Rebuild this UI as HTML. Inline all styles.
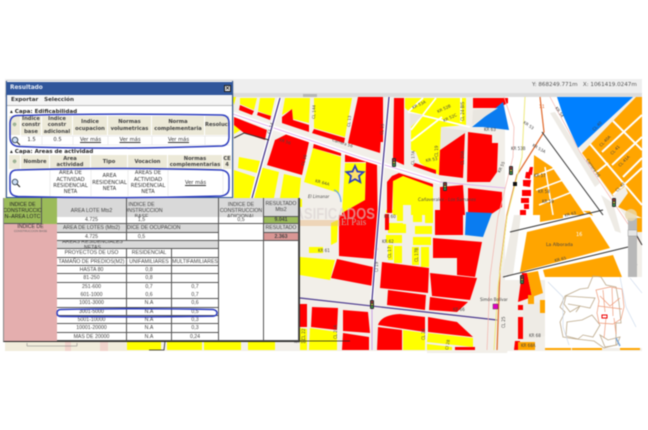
<!DOCTYPE html>
<html><head><meta charset="utf-8"><style>
html,body{margin:0;padding:0;background:#fff}
#p{position:relative;width:648px;height:430px;overflow:hidden;background:#fff;font-family:"DejaVu Sans","Liberation Sans",sans-serif;filter:blur(.5px)}
svg{position:absolute;left:0;top:0}
.a{position:absolute;box-sizing:border-box}
.c{position:absolute;box-sizing:border-box;display:flex;align-items:center;justify-content:center;text-align:center;font-size:5.2px;line-height:6.4px;color:#333;overflow:hidden}
.h{background:#ece9d8;font-weight:bold;border-right:1px solid #fff;color:#444}
.u{text-decoration:underline}
.t{position:absolute;box-sizing:border-box;display:flex;align-items:center;justify-content:center;text-align:center;font:5.2px/6px "Liberation Sans",sans-serif;color:#444;overflow:hidden;border-right:1px solid #555;border-bottom:1px solid #555;background:#fff}
.g{background:#d9d9d9}
</style></head><body><div id="p">
<div class="a" style="left:5px;top:79px;width:637px;height:14px;background:#eee"></div>
<div class="a" style="left:5px;top:93px;width:637px;height:4px;background:#dcdcdc"></div>
<div class="a" style="left:303px;top:94px;width:14px;height:3px;background:#b5b5b5"></div>
<div class="a" style="left:532px;top:81px;font-size:5.6px;line-height:9px;color:#555;white-space:pre">Y: 868249.771m   X: 1061419.0247m</div>

<svg width="648" height="430" viewBox="0 0 648 430">
<rect x="5" y="97" width="637" height="254" fill="#f2efe9"/>
<!-- white corridors -->
<path d="M505 97h52l15 40 50 75 6 8v60h-123z" fill="#fff"/>
<path d="M427 293l100-10-20 70h-80z" fill="#f2efe9"/>
<!-- yellow -->
<g fill="#ff0">
<path d="M240 98h17l-3 12-14-6zM260 98h15l-4 18-13-5zM285 98h25l-1 25-16-4-1-10-10 6zM314 98h38l-7 39-31-9zM239 157l21 4-3 12-19-5zM234 170l21 7-5 21h-16zM260 167l19 5-5 26h-20zM284 174l17 4-2 20h-19zM313 148l28 9-2 36-35-11zM345 163h21l-1 37-23 13z"/>
<path d="M234 124l10 4-10 6zM232 97h4l-2 8z"/>
<path d="M299 199h3l0 8h-3zM331 223l7-3-1 22-6 3zM300 257l35 3-5 20-30-5zM309 247h14v6h-14z"/>
<path d="M127 341h34v9h-34zM167 341h35v9h-35zM204 341h37v9h-37zM248 341h27v9h-27zM310 328l27 4v18h-28zM300 328l7 1v21h-7zM403 330l22 3v17h-22zM428 333l45 5v9l-46-5zM427 344l25 3v3h-25z"/>
<path d="M405 98h61v27l-25 2-2 48-19-12-4-11-5-2v-37l-6-5z"/>
<path d="M393 180l10-5 30 12v28h-40z"/>
<path d="M388 223h18v10h-18zM415 226h17v8h-17zM413 237h18v8h-18zM386 235h16v8h-16zM388 245h5v15h-5zM394 246h8v17h-8zM412 247h7v18h-7zM421 247h8v20h-8zM397 210h7v11h-7zM413 205h9v17h-9zM425 205h8v18h-8zM386 210h9v3h-9z"/>
</g>
<path d="M408 112l62 15M411 130l25-32M411 141l31-24M423 98l-15 14M461 98v24" stroke="#fff" stroke-width="1.800" fill="none"/>
<path d="M403 205h8v19h-8z" fill="#f2efe9"/>
<!-- red -->
<g fill="#f00">
<path d="M240 105l14 6-2 4-13-5zM258 112l13 4-1 4-13-5zM234 117l33 13-2 10-21-7-10-8zM282 117l10-8 1 11 16 5v7l-27-9zM275 140l14-7 20 9-7 33-35-10zM314 129l31 9-1 5-32-10zM314 143l27 9v4l-28-8zM358 97h25l-3 56-32-10 9-41zM345 153l32 10 1 87h-38l2-37 23-13 1-38-21 0z"/>
<path d="M339 215h36l-1 44-35-3zM337 259l36 8v19l-42-8zM382 262l47 6-1 25-48-5zM388 290l38 5-1 15-38-5zM430 273l47 5-7 22-38-4zM430 297l38 5-11 10-28-2zM433 238l49 4-7 35-18-2v-17h-24zM435 210h28v25h-28zM300 304h7v23h-7zM312 307l26 1-1 22-26-3zM343 310l25 2 2 21-27-2zM343 333l26 4v13h-27zM378 327l24 3v20h-25zM378 325q3-10 22-11l25 3v15zM428 317l29 5 16 15-45-5zM455 347h20v3h-20z"/>
<path d="M394 98h10v67l-11-5zM413 166l2-3 21 7v4zM387 182l5-6 7-3 34 11v3l-30-11-10 5-1 32h-5zM385 214h4v16h-4zM380 98h3v44h-3z"/>
<path d="M473 98h35v5l-10 5-25 0zM440 150l25-18-2 46-24-3zM468 132l24 3v8h6l-1 29-7 10h-23zM440 187l23-2 2 30-25 0zM468 188l34 4v15l-12 8h-22z"/>
<path d="M522 273l5 0 5 24-14 5zM518 305h6v5h-6zM518 317h6v22h-6zM515 341h5l-1 9h-5z"/>
</g>
<!-- blue -->
<path d="M557 97h76l-55 51-15-33z" fill="#0080ff"/>
<path d="M472 127l31-25 6 28-26-3z" fill="#0a7cf0"/>
<path d="M466 212l26 1-9 24-18-2z" fill="#0a7cf0"/>
<path d="M473 110l25-2-26 17zM441 127l27 4-28 19z" fill="#e9e6e0"/>
<path d="M410 113l13 2-13 13z" fill="#e9e6e0"/>
<!-- gray road bands -->
<path d="M550 113l5-1 45 71-5 4zM601 195l12 8 8 30-6-2zM514 215l7 0-8 60-11 0zM523 304l23-2v34l-23 4z" fill="#eeebe5"/>
<!-- orange -->
<g fill="#ffa500">
<path d="M582 153l54-56h6v121l-24-11 10-14-3-7-12 10z"/>
<path d="M534 155l18 12 33 48h-52z"/>
<path d="M527 232l63-15 20 31-90 24zM540 210h23v8l-23 4zM543 270l70-15 9 22h-77zM527 273l11-2 5 22-11 4zM528 295h6v9h-6zM540 300h5v13h-5zM518 342h17v8h-17zM637 218h5v14h-5zM583 211l7 0 3 5zM545 348h26v2h-26zM572 348h30v2h-30zM620 348h20v2h-20z"/>
</g>
<g stroke="#fff" fill="none" stroke-width="2">
<path d="M602 152L642 115M612 165L642 137M623 177L642 158M597 172L608 163M613 195L642 168M613 121L642 150M590 144L642 205"/>
<path stroke-width="1.500" d="M535 176l20-8M536 190l27-10M539 205l33-13M545 167l8 48"/>
</g>
<!-- red pieces beside orange -->
<g fill="#f00"><path d="M530 167l3 0-1 8-4-1zM526 172l5 0-1 7-5-1zM523 180l8 0-1 7-7-1zM522 190h9v6h-9zM521 198h8v5h-8zM524 204h5v5h-5zM520 210h6v5h-6z"/></g>
<g stroke="#fff" fill="none">
<path stroke-width="4.500" d="M233 114L362 158 440 182"/>
</g>
<!-- roads colored -->
<g fill="none">
<path d="M233 114L362 158 440 182 505 188" stroke="#dca4ea" stroke-width=".8"/>
<path d="M280 98L252 198" stroke="#fff" stroke-width="4"/>
<path d="M280 98L252 198" stroke="#4b3a8f" stroke-width="1.300"/>
<path d="M389 97L383 163 372 300" stroke="#fff" stroke-width="3.500"/>
<path d="M389 97L383 163 372 300" stroke="#4b3a8f" stroke-width="1.300"/>
<path d="M300 298L497 320" stroke="#f2efe9" stroke-width="3"/>
<path d="M300 298L497 320" stroke="#4b3a8f" stroke-width="1.200"/>
<path d="M372 300v50" stroke="#caa5e6" stroke-width="1"/>
<path d="M540 97l4 35-27 43-10 40-7 55-3 80" stroke="#e0692b" stroke-width="1.200"/>
<path d="M525 97l-3 60-15 60-9 70-4 63" stroke="#eeea80" stroke-width="1"/>
<path d="M504 97l10 30-1 30-15 60-8 60-3 73M550 97l30 55 40 60 22 33" stroke="#f3b5ae" stroke-width=".7"/>
<path d="M234 138l10-5 25 7M542 132l61 83M510 232l93-22M503 277l125-30M628 220l14 25" stroke="#333" stroke-width="1"/>
<path d="M300 341h50M165 341l-1 9h-15" stroke="#222" stroke-width=".8"/>
<path d="M334 190q6 2 7 12" stroke="#6ca9e0" stroke-width="1.200"/>
</g>
<!-- star -->
<path d="M355 166l2.500 5.500 6 .6-4.500 4 1.300 6-5.300-3-5.300 3 1.300-6-4.500-4 6-.6z" fill="#ffe36a" stroke="#3040c0" stroke-width="1.800"/>
<!-- traffic lights -->
<g>
<rect x="392" y="158" width="4" height="9" rx="1" fill="#333"/><circle cx="394" cy="160" r=".9" fill="#c33"/><circle cx="394" cy="162.500" r=".9" fill="#cc3"/><circle cx="394" cy="165" r=".9" fill="#3c5"/>
<rect x="370" y="300" width="4" height="9" rx="1" fill="#333"/><circle cx="372" cy="302" r=".9" fill="#c33"/><circle cx="372" cy="304.500" r=".9" fill="#cc3"/><circle cx="372" cy="307" r=".9" fill="#3c5"/>
<rect x="443" y="182" width="4" height="9" rx="1" fill="#333"/><circle cx="445" cy="184" r=".9" fill="#c33"/><circle cx="445" cy="186.500" r=".9" fill="#cc3"/><circle cx="445" cy="189" r=".9" fill="#3c5"/>
<rect x="509" y="166" width="4" height="9" rx="1" fill="#333"/><circle cx="511" cy="168" r=".9" fill="#c33"/><circle cx="511" cy="170.500" r=".9" fill="#cc3"/><circle cx="511" cy="173" r=".9" fill="#3c5"/>
<rect x="612" y="198" width="4" height="9" rx="1" fill="#333"/><circle cx="614" cy="200" r=".9" fill="#c33"/><circle cx="614" cy="202.500" r=".9" fill="#cc3"/><circle cx="614" cy="205" r=".9" fill="#3c5"/>
<rect x="520" y="275" width="4" height="9" rx="1" fill="#333"/><circle cx="522" cy="277" r=".9" fill="#c33"/><circle cx="522" cy="279.500" r=".9" fill="#cc3"/><circle cx="522" cy="282" r=".9" fill="#3c5"/>
</g>
<rect x="513" y="182" width="4" height="4" fill="#111"/>
<rect x="493" y="304" width="5" height="5" fill="#e000c0" stroke="#333" stroke-width=".4"/>
<!-- map labels -->
<g font-family="DejaVu Sans,sans-serif" font-size="4" fill="#444">
<text x="270" y="134" transform="rotate(-72 270 134)">CL 14</text>
<text x="279" y="141" transform="rotate(18 279 141)">KR 56</text>
<text x="315" y="119" transform="rotate(-88 315 119)">CL 144</text>
<text x="350" y="127" transform="rotate(-85 350 127)">CL 13</text>
<text x="383" y="135" transform="rotate(-85 383 135)">CL 15</text>
<text x="304" y="166" transform="rotate(-75 304 166)">CL 16</text>
<text x="332" y="141" transform="rotate(18 332 141)">Carrera 56</text>
<text x="315" y="182" transform="rotate(15 315 182)">KR 64A</text>
<text x="413" y="109" transform="rotate(-25 413 109)">KR 53A</text>
<text x="438" y="113" transform="rotate(-25 438 113)">KR 52B</text>
<text x="444" y="122" transform="rotate(-25 444 122)">KR 52C</text>
<text x="464" y="121" transform="rotate(-90 464 121)">CL 24 BIS</text>
<text x="414" y="165" transform="rotate(-88 414 165)">CL 17A</text>
<text x="438" y="157" transform="rotate(-90 438 157)">CL 19</text>
<text x="426" y="162" transform="rotate(-10 426 162)">KR 53</text>
<text x="484" y="131">KR 63</text>
<text x="464" y="165" transform="rotate(-90 464 165)">CL 20A</text>
<text x="500" y="173" transform="rotate(-65 500 173)">KR 55</text>
<text x="318" y="252">KR 61</text>
<text x="382" y="243">KR 62</text>
<text x="384" y="218">KR 60</text>
<text x="453" y="311">KR 66</text>
<text x="391" y="258" transform="rotate(-90 391 258)">CL 17</text>
<text x="418" y="262" transform="rotate(-90 418 262)">CL 17B</text>
<text x="378" y="272" transform="rotate(-90 378 272)">Cl 19</text>
<text x="337" y="339" transform="rotate(-90 337 339)">CL 21A</text>
<text x="425" y="340" transform="rotate(-90 425 340)">CL 26</text>
<text x="305" y="340" transform="rotate(-90 305 340)">CL 22</text>
<text x="448" y="350" transform="rotate(-80 448 350)">Cl 28</text>
<text x="294" y="343">KR 68</text>
<text x="308" y="198" font-style="italic">El Limanar</text>
<text x="418" y="201" font-size="4.200" font-style="italic">Cañaverales - Los Samanes</text>
<text x="546" y="246" font-size="4.500">La Alborada</text>
<text x="480" y="301">Simón Bolívar</text>
<text x="576" y="236" fill="#fff" font-size="5">16</text>
<text x="539" y="108" fill="#e0692b" font-size="4.500">11</text>
<text x="511" y="150">KR 53B</text>
<text x="523" y="123" transform="rotate(35 523 123)">KR 53</text>
<text x="532" y="146" transform="rotate(30 532 146)">KR 53A</text>
<text x="534" y="177">KR 57</text>
<text x="538" y="193">KR 58</text>
<text x="542" y="203">KR 59</text>
<text x="555" y="108" transform="rotate(55 555 108)">KR 54</text>
<text x="594" y="131" transform="rotate(-45 594 131)">CL 40</text>
<text x="601" y="147" transform="rotate(-45 601 147)">CL 40A</text>
<text x="612" y="155" transform="rotate(-45 612 155)">CL 41</text>
<text x="620" y="167" transform="rotate(-45 620 167)">CL 41A</text>
<text x="586" y="160" transform="rotate(55 586 160)">Carrera 56</text>
<text x="617" y="192" transform="rotate(-45 617 192)">CL 42</text>
<text x="565" y="217" transform="rotate(-15 565 217)">KR 63</text>
<text x="555" y="262" transform="rotate(-14 555 262)">KR 65</text>
<text x="628" y="258" transform="rotate(50 628 258)">KR 50</text>
<text x="529" y="337">KR 68</text>
<text x="521" y="347">KR 68A</text>
<text x="505" y="328" transform="rotate(-90 505 328)">CL 25</text>
</g>
<!-- watermark -->
<rect x="264" y="220" width="76" height="6" fill="#e9b67c" opacity=".45"/>
<text x="277" y="219" textLength="98" lengthAdjust="spacingAndGlyphs" font-family="Liberation Sans,sans-serif" font-weight="bold" font-size="16" fill="#d8d0d0" opacity=".6">CLASIFICADOS</text>
<text x="341" y="225" font-family="Liberation Serif,serif" font-size="9" fill="#c9b9b0" opacity=".9">El País</text>
<!-- slider -->
<rect x="628" y="218" width="9" height="59" fill="#b8b8b8"/>
<rect x="628" y="230" width="9" height="6" fill="#e5e5e5" stroke="#999" stroke-width=".5"/>
<circle cx="631" cy="215" r="6" fill="#e8d9b0" opacity=".8"/>
<!-- inset -->
<rect x="545" y="277" width="97" height="71" fill="#fff"/>
<g fill="none" stroke="#bdaa8c" stroke-width=".8">
<path d="M565 296l15-7 8-1 5-12 8 1 5 8 10 2 3 16 2 20-5 0 0 22-12 3-10-7-18-2-13-2-3-15 5-10-5-5zM566 296l-2 8 6 8 10-6 10 2 5-10zM567 322l15-2 10-5 8 10-7 12-10-2-5 4-12-3z"/>
<path d="M600 335l8 5 12-3-3 8-12 2zM568 304l12 2-4 6" />
</g>
<g fill="none" stroke="#ee9a78" stroke-width=".7">
<path d="M596 290l14-3 12 2 2 18-3 12-8 5-14-1-2-10 2-12zM600 296l10 10 10-8M603 290l2 22M612 288l1 28M598 306l24 3M606 318l-2 20M614 318l2 16"/>
</g>
<g fill="none" stroke="#c8d6ea" stroke-width=".6"><path d="M548 282l15 15 0 30 6 18M620 277l6 30 10 20M630 278l12 15"/><path d="M616 338l4 8" stroke="#7ea8d8" stroke-width="1.500"/></g>
<rect x="602" y="315" width="5" height="3" fill="#fff" stroke="#e00" stroke-width="1"/>
<!-- bottom-left -->
<rect x="5" y="341" width="122" height="10" fill="#f1ecdb"/>
<path d="M65 341v10h6v-10zM100 341h8v10h-8z" fill="#f1c9c4" opacity=".7"/>
<path d="M27 343v3h50v-3" stroke="#777" stroke-width=".5" fill="none"/>
</svg>

<!-- dialog -->
<div class="a" style="left:6px;top:81px;width:227px;height:117px;background:#fff;border:1px solid #2f5597;border-top:none;box-shadow:0 0 1px #555"></div>
<div class="a" style="left:7px;top:82px;width:225px;height:13px;background:#30569b;color:#e8edf6;font:bold 5.800px/12px 'DejaVu Sans',sans-serif;padding-left:3px">Resultado</div>
<div class="a" style="left:224px;top:85px;width:7px;height:7px;background:#e8e8e8;border:1px solid #222;color:#111;font:bold 6px/5px 'DejaVu Sans',sans-serif;text-align:center">×</div>
<div class="a" style="left:7px;top:95px;width:225px;height:11px;background:#f5f5f5;border-bottom:1px solid #bbb;font:bold 5.600px/11px 'DejaVu Sans',sans-serif;color:#333;padding-left:4px;white-space:pre">Exportar   Selección</div>
<div class="a" style="left:10px;top:108px;font:bold 5.600px/8px 'DejaVu Sans',sans-serif;color:#222;white-space:pre">▴ Capa: Edificabilidad</div>
<div class="a" style="left:10px;top:148px;font:bold 5.600px/8px 'DejaVu Sans',sans-serif;color:#222;white-space:pre">▴ Capa: Areas de actividad</div>

<div class="c h" style="left:9px;top:116px;width:12px;height:19px;color:#6a8f6a">⊕</div>
<div class="c h" style="left:21px;top:116px;width:21px;height:19px">Indice constr base</div>
<div class="c h" style="left:42px;top:116px;width:31px;height:19px">Indice constr adicional</div>
<div class="c h" style="left:73px;top:116px;width:35px;height:19px">Indice ocupacion</div>
<div class="c h" style="left:108px;top:116px;width:44px;height:19px">Normas volumetricas</div>
<div class="c h" style="left:152px;top:116px;width:53px;height:19px">Norma complementaria</div>
<div class="c h" style="left:205px;top:116px;width:25px;height:19px;justify-content:flex-start">Resolucion</div>
<div class="c" style="left:21px;top:136px;width:21px;height:9px">1.5</div>
<div class="c" style="left:42px;top:136px;width:31px;height:9px">0.5</div>
<div class="c u" style="left:73px;top:136px;width:35px;height:9px">Ver más</div>
<div class="c u" style="left:108px;top:136px;width:44px;height:9px">Ver más</div>
<div class="c u" style="left:152px;top:136px;width:53px;height:9px">Ver más</div>

<div class="c h" style="left:9px;top:155px;width:12px;height:14px;color:#6a8f6a">⊕</div>
<div class="c h" style="left:21px;top:155px;width:29px;height:14px">Nombre</div>
<div class="c h" style="left:50px;top:155px;width:41px;height:14px">Area actividad</div>
<div class="c h" style="left:91px;top:155px;width:37px;height:14px">Tipo</div>
<div class="c h" style="left:128px;top:155px;width:40px;height:14px">Vocacion</div>
<div class="c h" style="left:168px;top:155px;width:55px;height:14px">Normas complementarias</div>
<div class="c h" style="left:223px;top:155px;width:9px;height:14px;justify-content:flex-start">CE 4</div>
<div class="c" style="left:50px;top:170px;width:41px;height:26px">AREA DE ACTIVIDAD RESIDENCIAL NETA</div>
<div class="c" style="left:91px;top:170px;width:37px;height:26px">AREA RESIDENCIAL NETA</div>
<div class="c" style="left:128px;top:170px;width:40px;height:26px">AREAS DE ACTIVIDAD RESIDENCIAL NETA</div>
<div class="c u" style="left:168px;top:170px;width:55px;height:26px">Ver más</div>
<svg width="648" height="430" viewBox="0 0 648 430" style="pointer-events:none">
<g fill="none"><circle cx="15" cy="140" r="2.800" stroke="#345" stroke-width=".9" fill="#cfe0f5"/><path d="M17 142l3 3" stroke="#222" stroke-width="1.100"/><circle cx="15" cy="182" r="2.800" stroke="#345" stroke-width=".9" fill="#cfe0f5"/><path d="M17 184l3 3" stroke="#222" stroke-width="1.100"/>
<path d="M21 136h209M21 145h209M21 170h202M42 136v9M73 136v9M108 136v9M152 136v9M205 136v9M50 170v26M91 170v26M128 170v26M168 170v26M223 170v26" stroke="#ddd" stroke-width=".5"/></g>
</svg>

<!-- pink table -->
<div class="a" style="left:3px;top:198px;width:297px;height:144px;background:#fff;border-right:1.500px solid #333;border-bottom:1.500px solid #222;border-left:1px solid #888"></div>
<div class="a" style="left:4px;top:224px;width:53px;height:117px;background:#e4aeae"></div>
<div class="t" style="left:4px;top:198px;width:38px;height:26px;background:#9bbb59;border-right:1px solid #555;color:#222">INDICE DE CONSTRUCCIO N–AREA LOTC</div>
<div class="a" style="left:42px;top:198px;width:15px;height:26px;background:#9bbb59"></div>
<div class="a" style="left:4px;top:224px;width:53px;height:8px;font:5.200px/6px 'Liberation Sans',sans-serif;text-align:center;color:#333;white-space:nowrap">INDICE DE</div>
<div class="a" style="left:4px;top:230px;width:53px;height:3px;font:3px/3px 'Liberation Sans',sans-serif;text-align:center;color:#666;white-space:nowrap">CONSTRUCCION BASE</div>

<div class="t g" style="left:57px;top:198px;width:70px;height:26px">AREA LOTE Mts2</div>
<div class="t g" style="left:127px;top:198px;width:92px;height:26px;padding-right:62px">INDICE DE CONSTRUCCION BASE</div>
<div class="t g" style="left:219px;top:198px;width:45px;height:26px">INDICE DE CONSTRUCCION ADICIONAL</div>
<div class="t g" style="left:264px;top:198px;width:35px;height:19px">RESULTADO Mts2</div>
<div class="t" style="left:264px;top:217px;width:35px;height:7px;background:#9bbb59;font-weight:bold">9.041</div>
<div class="t" style="left:57px;top:217px;width:70px;height:7px">4.725</div>
<div class="t" style="left:127px;top:217px;width:92px;height:7px;padding-right:62px">1,5</div>
<div class="t" style="left:219px;top:217px;width:45px;height:7px">0,5</div>

<div class="t g" style="left:57px;top:224px;width:70px;height:9px">AREA DE LOTES (Mts2)</div>
<div class="t g" style="left:127px;top:224px;width:92px;height:9px;justify-content:flex-start">DICE DE OCUPACION</div>
<div class="t" style="left:219px;top:224px;width:45px;height:17px"></div>
<div class="t g" style="left:264px;top:224px;width:35px;height:9px">RESULTADO</div>
<div class="t" style="left:264px;top:233px;width:35px;height:8px;background:#d99694;font-weight:bold">2.363</div>
<div class="t" style="left:57px;top:233px;width:70px;height:8px">4.725</div>
<div class="t" style="left:127px;top:233px;width:92px;height:8px;padding-right:62px">0,5</div>
<div class="t g" style="left:57px;top:241px;width:162px;height:8px;padding-right:90px">AREAS RESIDENCIALES NETAS</div>
<div class="t" style="left:219px;top:241px;width:45px;height:100px"></div>
<div class="t" style="left:264px;top:241px;width:35px;height:100px"></div>

<div class="t" style="left:57px;top:249px;width:70px;height:9px">PROYECTOS DE USO</div><div class="t" style="left:127px;top:249px;width:45px;height:9px">RESIDENCIAL</div><div class="t" style="left:172px;top:249px;width:47px;height:9px"></div>
<div class="t" style="left:57px;top:258px;width:70px;height:8px">TAMAÑO DE PREDIOS(M2)</div><div class="t" style="left:127px;top:258px;width:45px;height:8px">UNIFAMILIARES</div><div class="t" style="left:172px;top:258px;width:47px;height:8px">MULTIFAMILIARES</div>
<div class="t" style="left:57px;top:266px;width:70px;height:8px">HASTA 80</div><div class="t" style="left:127px;top:266px;width:45px;height:8px">0,8</div><div class="t" style="left:172px;top:266px;width:47px;height:8px"></div>
<div class="t" style="left:57px;top:274px;width:70px;height:9px">81-250</div><div class="t" style="left:127px;top:274px;width:45px;height:9px">0,8</div><div class="t" style="left:172px;top:274px;width:47px;height:9px"></div>
<div class="t" style="left:57px;top:283px;width:70px;height:8px;border-bottom:none">251-600</div><div class="t" style="left:127px;top:283px;width:45px;height:8px;border-bottom:none">0,7</div><div class="t" style="left:172px;top:283px;width:47px;height:8px;border-bottom:none">0,7</div>
<div class="t" style="left:57px;top:291px;width:70px;height:8px">601-1000</div><div class="t" style="left:127px;top:291px;width:45px;height:8px">0,6</div><div class="t" style="left:172px;top:291px;width:47px;height:8px">0,7</div>
<div class="t" style="left:57px;top:299px;width:70px;height:9px">1001-3000</div><div class="t" style="left:127px;top:299px;width:45px;height:9px">N.A</div><div class="t" style="left:172px;top:299px;width:47px;height:9px">0,6</div>
<div class="t" style="left:57px;top:308px;width:70px;height:8px">3001-5000</div><div class="t" style="left:127px;top:308px;width:45px;height:8px">N.A</div><div class="t" style="left:172px;top:308px;width:47px;height:8px">0,5</div>
<div class="t" style="left:57px;top:316px;width:70px;height:8px">5001-10000</div><div class="t" style="left:127px;top:316px;width:45px;height:8px">N.A</div><div class="t" style="left:172px;top:316px;width:47px;height:8px">0,3</div>
<div class="t" style="left:57px;top:324px;width:70px;height:9px">10001-20000</div><div class="t" style="left:127px;top:324px;width:45px;height:9px">N.A</div><div class="t" style="left:172px;top:324px;width:47px;height:9px">0,3</div>
<div class="t" style="left:57px;top:333px;width:70px;height:8px">MAS DE 20000</div><div class="t" style="left:127px;top:333px;width:45px;height:8px">N.A</div><div class="t" style="left:172px;top:333px;width:47px;height:8px">0,24</div>

<svg width="648" height="430" viewBox="0 0 648 430">
<g fill="none" stroke="#2f3fc0" stroke-width="1.500">
<path d="M17 115.500Q10 116 10 124v13q0 9 9 9.500Q110 150 222 146q7-1 7-9v-14q0-8-8-8Q100 113 17 115.500z"/>
<path d="M17 170Q10 170 10 177v12q0 7 8 7.500Q120 199 221 196q8-1 8-8v-10q0-7-8-8Q110 167 17 170z"/>
<path d="M61 309.500q-4 0-4 3.500t4 3.500q80 .8 152-.3 4-.5 4-3.200t-4-3.500q-80-1.500-152 0z"/>
</g></svg>
</div></body></html>
